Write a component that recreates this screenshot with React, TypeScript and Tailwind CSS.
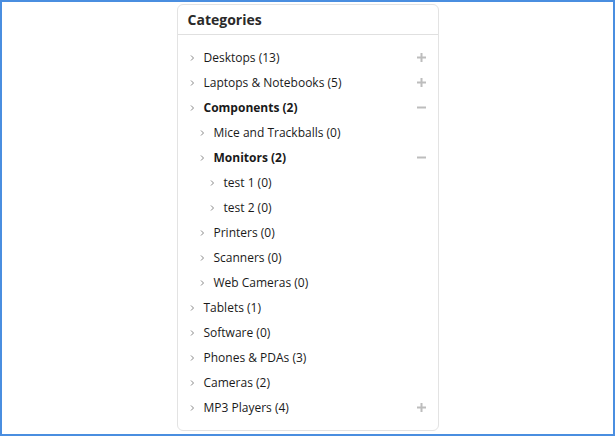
import React from "react";

type Cat = { name: string; level: number; bold?: boolean; toggle?: "plus" | "minus" };

const cats: Cat[] = [
  { name: "Desktops (13)", level: 0, toggle: "plus" },
  { name: "Laptops & Notebooks (5)", level: 0, toggle: "plus" },
  { name: "Components (2)", level: 0, bold: true, toggle: "minus" },
  { name: "Mice and Trackballs (0)", level: 1 },
  { name: "Monitors (2)", level: 1, bold: true, toggle: "minus" },
  { name: "test 1 (0)", level: 2 },
  { name: "test 2 (0)", level: 2 },
  { name: "Printers (0)", level: 1 },
  { name: "Scanners (0)", level: 1 },
  { name: "Web Cameras (0)", level: 1 },
  { name: "Tablets (1)", level: 0 },
  { name: "Software (0)", level: 0 },
  { name: "Phones & PDAs (3)", level: 0 },
  { name: "Cameras (2)", level: 0 },
  { name: "MP3 Players (4)", level: 0, toggle: "plus" },
];

const indent = ["pl-[12px]", "pl-[22px]", "pl-[32px]"];

function Chevron() {
  return (
    <svg width="5" height="8" viewBox="0 0 5 8" className="shrink-0">
      <path d="M1 1.5 L3.5 4 L1 6.5" fill="none" stroke="#888" strokeWidth="1" />
    </svg>
  );
}

function Toggle({ kind }: { kind: "plus" | "minus" }) {
  return (
    <svg width="9" height="9" viewBox="0 0 9 9" className="shrink-0">
      <rect x="0" y="3.5" width="9" height="2" fill="#bdbdbd" />
      {kind === "plus" && <rect x="3.5" y="0" width="2" height="9" fill="#bdbdbd" />}
    </svg>
  );
}

export default function App() {
  return (
    <div className="w-[615px] h-[436px] border-2 border-[#4a8ee0] bg-white flex justify-center font-['Open_Sans',sans-serif]">
      <div className="mt-[2px] w-[262px] h-[427px] border border-[#e3e3e3] rounded-[6px] flex flex-col">
        <div className="h-[30px] border-b border-[#e0e0e0] flex items-center px-[10px]">
          <h3 className="text-[14px] font-bold text-[#2a2a2a] leading-none">Categories</h3>
        </div>
        <ul className="pt-[10px] pr-[12px]">
          {cats.map((c) => (
            <li key={c.name} className={`h-[25px] flex items-center ${indent[c.level]}`}>
              <Chevron />
              <span
                className={`ml-[9px] text-[12px] text-[#1a1a1a] ${c.bold ? "font-bold" : ""}`}
              >
                {c.name}
              </span>
              <span className="ml-auto flex items-center">
                {c.toggle && <Toggle kind={c.toggle} />}
              </span>
            </li>
          ))}
        </ul>
      </div>
    </div>
  );
}
